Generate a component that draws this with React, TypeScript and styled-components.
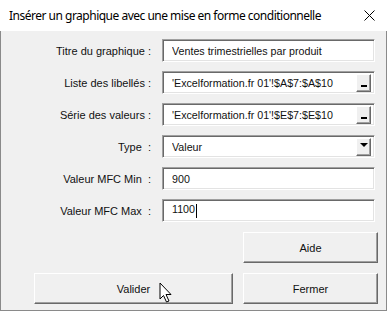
import React from 'react';
import styled, { createGlobalStyle } from 'styled-components';

const Global = createGlobalStyle`
  html, body { margin: 0; padding: 0; background: #fff; }
  body { font-family: "Noto Sans", "DejaVu Sans", sans-serif; }
`;

const Window = styled.div`
  width: 387px;
  height: 311px;
  box-sizing: border-box;
  display: flex;
  flex-direction: column;
  position: relative;
  background: #f0f0f0;
`;

const TitleBar = styled.div`
  height: 31px;
  flex: none;
  background: #fff;
  display: flex;
  align-items: center;
  justify-content: space-between;
  padding: 0 10px 0 9px;
  font-size: 12px;
  letter-spacing: -0.5px;
  color: #000;
`;

const Close = styled.svg`
  width: 11px;
  height: 11px;
  margin-right: 2px;
`;

const Client = styled.div`
  flex: 1;
  border: 1px solid #8a8a8a;
  border-top: none;
  padding: 8px 0 0 0;
  display: flex;
  flex-direction: column;
  gap: 10px;
  font-family: "Liberation Sans", Arial, sans-serif;
  font-size: 11px;
`;

const Form = styled.div`
  display: grid;
  grid-template-columns: 150px 213px;
  column-gap: 11px;
  row-gap: 9px;
  grid-auto-rows: 23px;
`;

const Label = styled.div`
  display: flex;
  align-items: center;
  justify-content: flex-end;
  white-space: pre;
  color: #111;
`;

const Field = styled.div`
  position: relative;
  box-sizing: border-box;
  background: #fff;
  border-top: 1px solid #a0a0a0;
  border-left: 1px solid #a0a0a0;
  border-right: 1px solid #fff;
  border-bottom: 1px solid #fff;
  box-shadow: inset 1px 1px 0 #696969, inset -1px -1px 0 #e3e3e3;
  display: flex;
  align-items: center;
  padding: 0 3px 0 9px;
  color: #111;
  white-space: nowrap;
`;

const Value = styled.span`
  flex: 1;
  overflow: hidden;
  font-size: 10.7px;
`;

const Caret = styled.span`
  display: inline-block;
  width: 1px;
  height: 14px;
  background: #000;
  vertical-align: middle;
  margin-left: 1px;
`;

const MiniButton = styled.div<{ $center?: boolean }>`
  flex: none;
  width: 15px;
  height: 18px;
  box-sizing: border-box;
  background: #f0f0f0;
  border-top: 1px solid #fff;
  border-left: 1px solid #fff;
  border-right: 1px solid #696969;
  border-bottom: 1px solid #696969;
  box-shadow: inset -1px -1px 0 #a0a0a0;
  display: flex;
  align-items: ${(p) => (p.$center ? 'center' : 'flex-end')};
  justify-content: center;
  padding-bottom: ${(p) => (p.$center ? '0' : '4px')};
`;

const Dash = styled.div`
  width: 6px;
  height: 2px;
  background: #000;
`;

const DropArrow = styled.div`
  width: 0;
  height: 0;
  border-left: 4px solid transparent;
  border-right: 4px solid transparent;
  border-top: 4px solid #000;
  margin-bottom: 3px;
`;

const Buttons = styled.div`
  display: grid;
  grid-template-columns: 199px 135px;
  grid-auto-rows: 31px;
  gap: 10px;
  justify-content: end;
  padding-right: 8px;
`;

const Button = styled.div<{ $col: number }>`
  grid-column: ${(p) => p.$col};
  box-sizing: border-box;
  background: #f0f0f0;
  border-top: 1px solid #fff;
  border-left: 1px solid #fff;
  border-right: 1px solid #696969;
  border-bottom: 1px solid #696969;
  box-shadow: inset -1px -1px 0 #a0a0a0;
  display: flex;
  align-items: center;
  justify-content: center;
  color: #111;
`;

const Cursor = styled.svg`
  position: absolute;
  left: 159px;
  top: 282px;
  width: 14px;
  height: 21px;
`;

const rows = [
  { label: 'Titre du graphique :', value: 'Ventes trimestrielles par produit' },
  { label: 'Liste des libellés :', value: "'Excelformation.fr 01'!$A$7:$A$10", mini: 'ref' },
  { label: 'Série des valeurs :', value: "'Excelformation.fr 01'!$E$7:$E$10", mini: 'ref' },
  { label: 'Type  :', value: 'Valeur', mini: 'drop' },
  { label: 'Valeur MFC Min  :', value: '900' },
  { label: 'Valeur MFC Max  :', value: '1100', caret: true },
];

export default function App() {
  return (
    <Window>
      <Global />
      <TitleBar>
        <span>Insérer un graphique avec une mise en forme conditionnelle</span>
        <Close viewBox="0 0 11 11">
          <path d="M0.5 0.5 L10.5 10.5 M10.5 0.5 L0.5 10.5" stroke="#000" strokeWidth="1" />
        </Close>
      </TitleBar>
      <Client>
        <Form>
          {rows.map((r) => (
            <React.Fragment key={r.label}>
              <Label>{r.label}</Label>
              <Field>
                <Value>
                  {r.value}
                  {r.caret && <Caret />}
                </Value>
                {r.mini === 'ref' && (
                  <MiniButton>
                    <Dash />
                  </MiniButton>
                )}
                {r.mini === 'drop' && (
                  <MiniButton $center>
                    <DropArrow />
                  </MiniButton>
                )}
              </Field>
            </React.Fragment>
          ))}
        </Form>
        <Buttons>
          <Button $col={2}>Aide</Button>
          <Button $col={1}>Valider</Button>
          <Button $col={2}>Fermer</Button>
        </Buttons>
      </Client>
      <Cursor viewBox="0 0 14 21">
        <path
          d="M1 1 L1 17 L4.5 13.5 L7.5 20 L10 19 L7 12.5 L12 12.5 Z"
          fill="#fff"
          stroke="#000"
          strokeWidth="1"
          strokeLinejoin="miter"
        />
      </Cursor>
    </Window>
  );
}
